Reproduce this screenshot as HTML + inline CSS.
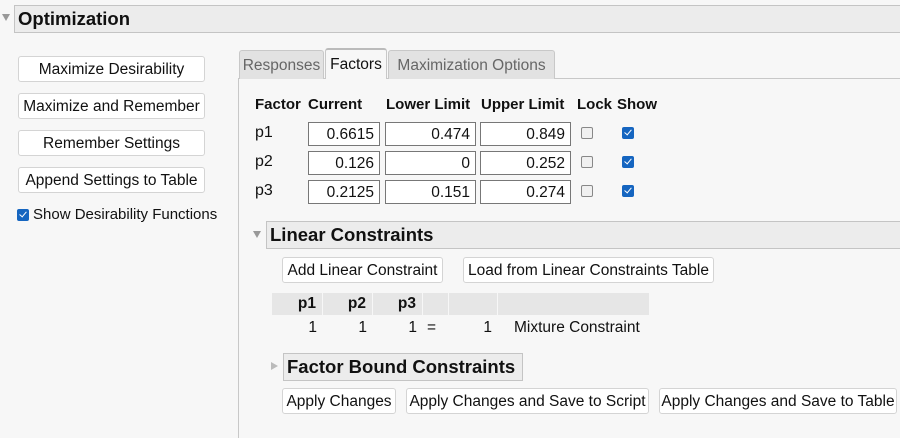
<!DOCTYPE html>
<html><head><style>
body{margin:0;width:900px;height:424px;background:#f7f7f7;font-family:"Liberation Sans",sans-serif;position:relative;overflow:hidden;color:#111}
div,span{position:absolute;box-sizing:border-box}
.hdr{background:#ececec;border:1px solid #c4c4c4;font-weight:bold;font-size:18.5px;padding-left:3px;line-height:26px}
.btn{background:#fff;border:1px solid #d4d4d4;border-radius:3px;font-size:15.5px;text-align:center;line-height:26px;white-space:nowrap}
.tab{border:1px solid #c8c8c8;border-bottom:none;border-radius:3px 3px 0 0;background:#e2e2e2;color:#666;font-size:15.5px;text-align:center;line-height:29px}
.h{font-weight:bold;font-size:15px;top:96px}
.in{background:#fff;border:1px solid #777;height:24px;font-size:15.5px;text-align:right;padding-right:5px;line-height:23px}
.lb{font-size:16px;left:255px}
.cb{width:12px;height:12px;border:1px solid #888;border-radius:2px;background:#f0f0f0}
.ck{width:12px;height:12px;border-radius:2px;background:#1565c0}
.ck:after{content:"";position:absolute;left:4px;top:1px;width:3px;height:6px;border:solid #fff;border-width:0 1.3px 1.3px 0;transform:rotate(40deg)}
.th{background:#e6e6e6;top:293px;height:22px;font-weight:bold;font-size:15.5px;text-align:right;padding-right:6px;line-height:22px}
.tv{top:318px;font-size:15.5px;text-align:right;line-height:19px}
.tri{width:0;height:0;border-left:4px solid transparent;border-right:4px solid transparent;border-top:7px solid #999}
</style></head><body>
<div class="tri" style="left:2px;top:14px"></div>
<div class="hdr" style="left:14px;top:5px;width:890px;height:28px">Optimization</div>

<div class="btn" style="left:18px;top:56px;width:187px;height:26px">Maximize Desirability</div>
<div class="btn" style="left:18px;top:93px;width:187px;height:26px">Maximize and Remember</div>
<div class="btn" style="left:18px;top:130px;width:187px;height:26px">Remember Settings</div>
<div class="btn" style="left:18px;top:167px;width:187px;height:26px">Append Settings to Table</div>
<div class="ck" style="left:17px;top:209px"></div>
<span style="left:33px;top:206px;font-size:15px">Show Desirability Functions</span>

<div style="left:238px;top:78px;width:670px;height:360px;border-left:1px solid #c8c8c8;border-top:1px solid #c8c8c8"></div>
<div class="tab" style="left:239px;top:50px;width:85px;height:29px">Responses</div>
<div class="tab" style="left:325px;top:48px;width:62px;height:31px;background:#f7f7f7;color:#111;border-top:2px solid #bbb">Factors</div>
<div class="tab" style="left:388px;top:50px;width:167px;height:29px">Maximization Options</div>

<span class="h" style="left:255px">Factor</span>
<span class="h" style="left:308px">Current</span>
<span class="h" style="left:386px">Lower Limit</span>
<span class="h" style="left:481px">Upper Limit</span>
<span class="h" style="left:577px">Lock</span>
<span class="h" style="left:617px">Show</span>

<span class="lb" style="top:124px">p1</span>
<span class="lb" style="top:153px">p2</span>
<span class="lb" style="top:182px">p3</span>
<div class="in" style="left:308px;top:122px;width:72px">0.6615</div>
<div class="in" style="left:385px;top:122px;width:91px">0.474</div>
<div class="in" style="left:480px;top:122px;width:91px">0.849</div>
<div class="in" style="left:308px;top:151px;width:72px">0.126</div>
<div class="in" style="left:385px;top:151px;width:91px">0</div>
<div class="in" style="left:480px;top:151px;width:91px">0.252</div>
<div class="in" style="left:308px;top:180px;width:72px">0.2125</div>
<div class="in" style="left:385px;top:180px;width:91px">0.151</div>
<div class="in" style="left:480px;top:180px;width:91px">0.274</div>
<div class="cb" style="left:581px;top:127px"></div>
<div class="cb" style="left:581px;top:156px"></div>
<div class="cb" style="left:581px;top:185px"></div>
<div class="ck" style="left:622px;top:127px"></div>
<div class="ck" style="left:622px;top:156px"></div>
<div class="ck" style="left:622px;top:185px"></div>

<div class="tri" style="left:253px;top:231px"></div>
<div class="hdr" style="left:266px;top:221px;width:640px;height:28px">Linear Constraints</div>
<div class="btn" style="left:282px;top:257px;width:161px;height:26px">Add Linear Constraint</div>
<div class="btn" style="left:463px;top:257px;width:251px;height:26px">Load from Linear Constraints Table</div>

<div class="th" style="left:272px;width:50px">p1</div>
<div class="th" style="left:323px;width:49px">p2</div>
<div class="th" style="left:373px;width:49px">p3</div>
<div class="th" style="left:423px;width:25px"></div>
<div class="th" style="left:449px;width:48px"></div>
<div class="th" style="left:498px;width:151px"></div>
<span class="tv" style="left:272px;width:45px">1</span>
<span class="tv" style="left:323px;width:44px">1</span>
<span class="tv" style="left:373px;width:44px">1</span>
<span class="tv" style="left:427px">=</span>
<span class="tv" style="left:449px;width:43px">1</span>
<span class="tv" style="left:514px">Mixture Constraint</span>

<div style="left:271px;top:362px;width:0;height:0;border-top:4px solid transparent;border-bottom:4px solid transparent;border-left:7px solid #bbb"></div>
<div class="hdr" style="left:283px;top:353px;width:240px;height:28px">Factor Bound Constraints</div>
<div class="btn" style="left:282px;top:388px;width:114px;height:26px">Apply Changes</div>
<div class="btn" style="left:406px;top:388px;width:243px;height:26px">Apply Changes and Save to Script</div>
<div class="btn" style="left:659px;top:388px;width:238px;height:26px">Apply Changes and Save to Table</div>
</body></html>
